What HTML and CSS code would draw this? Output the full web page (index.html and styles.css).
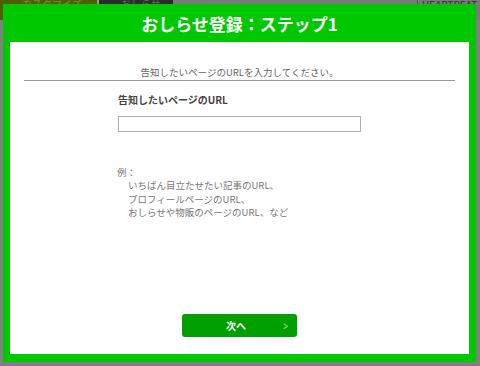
FILE: index.html
```html
<!DOCTYPE html>
<html lang="ja">
<head>
    <meta charset="UTF-8">
    <meta name="viewport" content="width=device-width, initial-scale=1.0">
    <title>おしらせ登録</title>
    <link rel="stylesheet" href="styles.css">
</head>
<body>
    <!-- 背景のページ（オーバーレイで暗くなっている） -->
    <div class="page">
        <div class="page-header">
            <div class="page-tab olive">カスタマイズ</div>
            <div class="page-tab dark">おしらせ</div>
            <div class="page-spacer"></div>
            <div class="page-brand">HEARTREAT INFO</div>
        </div>
    </div>

    <!-- モーダル -->
    <div class="modal">
        <div class="modal-title">おしらせ登録：ステップ1</div>
        <div class="modal-body">
            <div class="modal-lead">告知したいページのURLを入力してください。</div>

            <div class="form-area">
                <label class="form-label" for="urlInput">告知したいページのURL</label>
                <input type="text" class="url-input" id="urlInput">

                <div class="example">
                    <div>例：</div>
                    <div class="example-item">いちばん目立たせたい記事のURL、</div>
                    <div class="example-item">プロフィールページのURL、</div>
                    <div class="example-item">おしらせや物販のページのURL、など</div>
                </div>
            </div>

            <button type="button" class="next-button">
                <span class="next-label">次へ</span>
                <span class="next-arrow">&gt;</span>
            </button>
        </div>
    </div>
</body>
</html>
```

FILE: styles.css
```css
body {
    margin: 0;
    padding: 0;
    background: #808080;
    font-family: "Noto Sans CJK JP", "Noto Sans", sans-serif;
    color: #333333;
    height: 366px;
    overflow: hidden;
}

.page-header {
    display: flex;
    height: 20px;
    background: #7a7a7a;
}

.page-tab {
    font-size: 10px;
    line-height: 8px;
    color: #7c8a3a;
    padding: 0 0 0 22px;
    overflow: hidden;
    white-space: nowrap;
}

.page-tab.olive {
    background: #4f5e00;
    width: 75px;
    border-right: 2px solid #9a9a9a;
}

.page-tab.dark {
    background: #2b2b2b;
    width: 52px;
    color: #6a6a6a;
}

.page-spacer {
    flex-grow: 1;
}

.page-brand {
    font-size: 10px;
    line-height: 9px;
    color: #2e2e2e;
    border-left: 1px solid #555555;
    padding-left: 4px;
    width: 58px;
    overflow: hidden;
    white-space: nowrap;
}

/* モーダル */
.modal {
    position: absolute;
    left: 3px;
    top: 4px;
    width: 473px;
    height: 358px;
    background: #00c800;
    display: flex;
    flex-direction: column;
}

.modal-title {
    height: 38px;
    line-height: 40px;
    text-align: center;
    color: #FFFFFF;
    font-size: 17px;
    font-weight: bold;
}

.modal-body {
    flex-grow: 1;
    margin: 0 7px 8px 7px;
    background: #FFFFFF;
    display: flex;
    flex-direction: column;
    align-items: center;
    padding-bottom: 17px;
}

.modal-lead {
    align-self: stretch;
    margin: 24px 14px 0 14px;
    padding-bottom: 2px;
    border-bottom: 1px solid #999999;
    text-align: center;
    font-size: 9.5px;
    line-height: 12px;
    color: #666666;
}

.form-area {
    width: 243px;
    display: flex;
    flex-direction: column;
}

.form-label {
    margin-top: 13px;
    font-size: 10px;
    line-height: 12px;
    font-weight: bold;
    color: #444444;
}

.url-input {
    margin-top: 10px;
    height: 16px;
    box-sizing: border-box;
    border: 1px solid #b0b0b0;
    padding: 0 4px;
    font-size: 10px;
}

.example {
    margin-top: 34px;
    margin-left: -1px;
    font-size: 9.5px;
    line-height: 13.3px;
    color: #777777;
}

.example-item {
    padding-left: 11px;
}

.next-button {
    margin-top: auto;
    width: 115px;
    height: 23px;
    background: #009f00;
    border: none;
    border-radius: 3px;
    color: #FFFFFF;
    display: flex;
    align-items: center;
    padding: 0 8px 0 0;
    font-family: "Noto Sans CJK JP", "Noto Sans", sans-serif;
    cursor: pointer;
}

.next-label {
    flex-grow: 1;
    text-align: center;
    padding-left: 8px;
    font-size: 10px;
    font-weight: bold;
}

.next-arrow {
    font-size: 13px;
    font-weight: 300;
    color: #d8f2d8;
    transform: scaleX(0.6);
}
```
